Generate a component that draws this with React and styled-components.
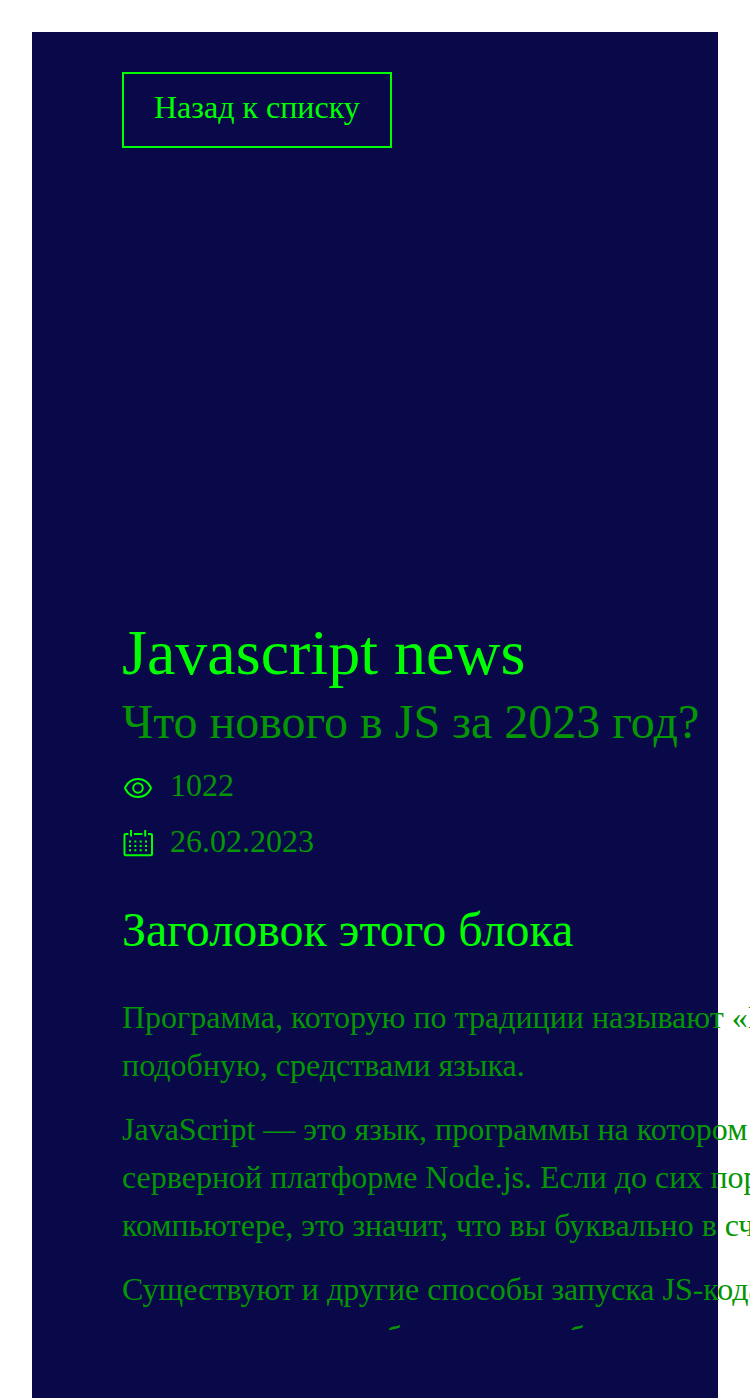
import React from 'react';
import styled, { createGlobalStyle } from 'styled-components';

const GlobalStyle = createGlobalStyle`
  html, body { margin: 0; padding: 0; background: #fff; }
  body { overflow-x: hidden; font-family: "Liberation Serif", "Times New Roman", serif; }
  * { box-sizing: border-box; }
`;

const Page = styled.main`
  height: 1398px;
  margin: 0 32px;
  padding-top: 32px;
`;

const Panel = styled.div`
  height: 1366px;
  padding: 40px 20px 0 90px;
  background: #090949;
`;

const BackButton = styled.button`
  display: block;
  height: 76px;
  padding: 0 30px 6px;
  border: 2px solid #0f0;
  background: none;
  color: #0f0;
  font: 32px/48px "Liberation Serif", "Times New Roman", serif;
  white-space: nowrap;
`;

const Article = styled.article`
  display: flex;
  flex-direction: column;
  width: 1800px;
  height: 1182px;
  overflow: hidden;
`;

const Title = styled.h1`
  margin: 469px 0 0;
  font-size: 64px;
  line-height: 72px;
  font-weight: 400;
  color: #0f0;
`;

const Subtitle = styled.p`
  margin: 1px 0 7px;
  font-size: 48px;
  line-height: 64px;
  color: #049604;
`;

const Meta = styled.div`
  display: flex;
  align-items: center;
  gap: 16px;
  height: 48px;
  margin-bottom: 8px;
  font-size: 32px;
  line-height: 48px;
  color: #049604;
`;

const Icon = styled.svg`
  width: 32px;
  height: 32px;
  margin-top: 6px;
  fill: none;
  stroke: #0f0;
  stroke-width: 2;
`;

const BlockTitle = styled.h2`
  margin: 25px 0 31px;
  font-size: 48px;
  line-height: 64px;
  font-weight: 400;
  color: #0f0;
`;

const Paragraph = styled.p`
  margin: 0 0 16px;
  font-size: 32px;
  line-height: 48px;
  color: #049604;
  white-space: pre;
`;

const paragraphs = [
  [
    'Программа, которую по традиции называют «Hello, world!», очень проста. Она выводит куда-либо фразу «Hello, world!», или другую',
    'подобную, средствами языка.',
  ],
  [
    'JavaScript — это язык, программы на котором можно выполнять в разных средах. В нашем случае речь идёт о браузерах и о',
    'серверной платформе Node.js. Если до сих пор вы не написали ни строчки кода на JS и читаете этот текст в браузере, на настольном',
    'компьютере, это значит, что вы буквально в считанных секундах от своей первой JavaScript-программы.',
  ],
  [
    'Существуют и другие способы запуска JS-кода в браузере. Так, если говорить об обычном использовании программ на JavaScript,',
    'они загружаются в браузер для обеспечения работы веб-страниц.',
  ],
];

const EyeIcon = () => (
  <Icon viewBox="0 0 32 32">
    <path d="M3.3 15.2C5.4 11 10 7 16 7s10.600 4 12.700 8.200q.4.800 0 1.600C26.600 21 22 25 16 25S5.400 21 3.300 16.800q-.4-.8 0-1.600Z" />
    <circle cx="16" cy="16" r="4.800" />
  </Icon>
);

const CalendarIcon = () => (
  <Icon viewBox="0 0 32 32">
    <path d="M6.500 6H3.600Q2.500 6 2.500 7.100V26.200Q2.500 27.300 3.600 27.300H28.900Q30 27.300 30 26.200V7.100Q30 6 28.900 6H26M12 6h8.500M9 2v6.500M23.200 2v6.500" />
    <path strokeDasharray="2 3.330" d="M7 13.500h18.200M7 17.900h18.200M7 22.200h18.200" />
  </Icon>
);

export default function App() {
  return (
    <>
      <GlobalStyle />
      <Page>
        <Panel>
          <BackButton>Назад к списку</BackButton>
          <Article>
            <Title>Javascript news</Title>
            <Subtitle>Что нового в JS за 2023 год?</Subtitle>
            <Meta><EyeIcon />1022</Meta>
            <Meta><CalendarIcon />26.02.2023</Meta>
            <BlockTitle>Заголовок этого блока</BlockTitle>
            {paragraphs.map((lines) => (
              <Paragraph key={lines[0]}>{lines.join('\n')}</Paragraph>
            ))}
          </Article>
        </Panel>
      </Page>
    </>
  );
}
